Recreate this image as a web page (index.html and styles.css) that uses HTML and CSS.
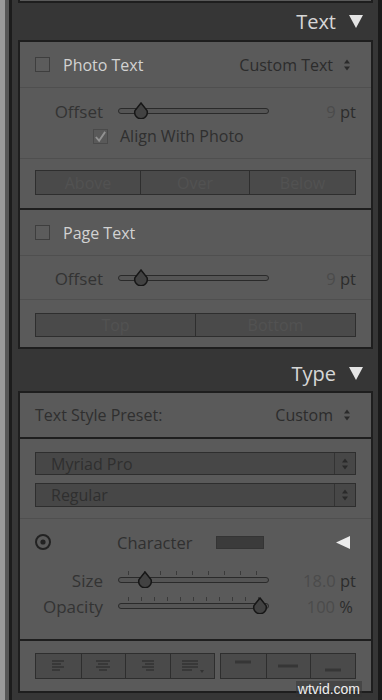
FILE: index.html
```html
<!DOCTYPE html>
<html>
<head>
<meta charset="utf-8">
<link rel="stylesheet" href="styles.css">
</head>
<body>
<div class="frame">
  <div class="panel">
    <div class="cap"></div>

    <div class="hdr"><span>Text</span><svg class="hdr-tri" width="14" height="13" viewBox="0 0 14 13"><polygon points="0,0 14,0 7,13"/></svg></div>
    <div class="box">
      <div class="crow">
        <span class="cb"></span><span class="light">Photo Text</span>
        <span class="sel">Custom Text <svg class="ud" width="6" height="12" viewBox="0 0 6 12"><polygon points="0,4.5 3,0.5 6,4.5"/><polygon points="0,7.5 3,11.5 6,7.5"/></svg></span>
      </div>
      <div class="blk blk-a">
        <div class="srow">
          <span class="sl">Offset</span>
          <div class="track"><svg class="thumb" style="left:14px" width="16" height="17" viewBox="0 0 16 17"><path d="M8 1 L14 8.5 A6.3 6.3 0 1 1 2 8.5 Z"/></svg></div>
          <span class="val"><span class="num">9</span> pt</span>
        </div>
        <div class="arow">
          <span class="cb"><svg width="14" height="14" viewBox="0 0 14 14"><path d="M2 7 L5.5 11 L12 1.5" fill="none" stroke="#929292" stroke-width="2"/></svg></span>
          <span>Align With Photo</span>
        </div>
      </div>
      <div class="blk blk-b">
        <div class="seg"><span>Above</span><span>Over</span><span>Below</span></div>
      </div>

      <div class="crow crow-2 split">
        <span class="cb"></span><span class="light">Page Text</span>
      </div>
      <div class="blk blk-c">
        <div class="srow">
          <span class="sl">Offset</span>
          <div class="track"><svg class="thumb" style="left:14px" width="16" height="17" viewBox="0 0 16 17"><path d="M8 1 L14 8.5 A6.3 6.3 0 1 1 2 8.5 Z"/></svg></div>
          <span class="val"><span class="num">9</span> pt</span>
        </div>
      </div>
      <div class="blk blk-d">
        <div class="seg seg-2"><span>Top</span><span>Bottom</span></div>
      </div>
    </div>

    <div class="hdr hdr-2"><span>Type</span><svg class="hdr-tri" width="14" height="13" viewBox="0 0 14 13"><polygon points="0,0 14,0 7,13"/></svg></div>
    <div class="box">
      <div class="prow">
        <span>Text Style Preset:</span>
        <span class="sel">Custom <svg class="ud" width="6" height="12" viewBox="0 0 6 12"><polygon points="0,4.5 3,0.5 6,4.5"/><polygon points="0,7.5 3,11.5 6,7.5"/></svg></span>
      </div>
      <div class="blk blk-e">
        <div class="dd"><span class="dd-t">Myriad Pro</span><span class="dd-a"><svg class="ud" width="6" height="12" viewBox="0 0 6 12"><polygon points="0,4.5 3,0.5 6,4.5"/><polygon points="0,7.5 3,11.5 6,7.5"/></svg></span></div>
        <div class="dd dd-2"><span class="dd-t">Regular</span><span class="dd-a"><svg class="ud" width="6" height="12" viewBox="0 0 6 12"><polygon points="0,4.5 3,0.5 6,4.5"/><polygon points="0,7.5 3,11.5 6,7.5"/></svg></span></div>
      </div>
      <div class="chrow">
        <svg class="target" width="18" height="18" viewBox="0 0 18 18"><circle cx="9" cy="9" r="7" fill="none" stroke="#222" stroke-width="2"/><circle cx="9" cy="9" r="2.6" fill="#222"/></svg>
        <span class="chlbl">Character</span>
        <span class="swatch"></span>
        <svg class="ltri" width="14" height="13" viewBox="0 0 14 13"><polygon points="14,0 14,13 0,6.5"/></svg>
      </div>
      <div class="blk blk-f">
        <div class="srow">
          <span class="sl">Size</span>
          <div class="track ticks-a"><svg class="thumb" style="left:18px" width="16" height="17" viewBox="0 0 16 17"><path d="M8 1 L14 8.5 A6.3 6.3 0 1 1 2 8.5 Z"/></svg></div>
          <span class="val"><span class="num">18.0</span> pt</span>
        </div>
        <div class="srow">
          <span class="sl">Opacity</span>
          <div class="track ticks-b"><svg class="thumb" style="left:133px" width="16" height="17" viewBox="0 0 16 17"><path d="M8 1 L14 8.5 A6.3 6.3 0 1 1 2 8.5 Z"/></svg></div>
          <span class="val val-p"><span class="num">100</span> %</span>
        </div>
      </div>
      <div class="blk blk-g">
        <div class="abar">
          <div class="agrp g4">
            <span class="ab"><svg width="20" height="16" viewBox="0 0 20 16"><path d="M4 3h12M4 6h9M4 9h12M4 12h8"/></svg></span>
            <span class="ab"><svg width="20" height="16" viewBox="0 0 20 16"><path d="M3 3h14M5 6h10M3 9h14M6 12h8"/></svg></span>
            <span class="ab"><svg width="20" height="16" viewBox="0 0 20 16"><path d="M4 3h12M7 6h9M4 9h12M8 12h8"/></svg></span>
            <span class="ab"><svg width="24" height="16" viewBox="0 0 24 16"><path d="M2 3h16M2 6h16M2 9h16M2 12h10"/><polygon class="fl" points="20,12 24,12 22,15"/></svg></span>
          </div>
          <div class="agrp g3">
            <span class="ab"><svg width="20" height="16" viewBox="0 0 20 16"><path class="thick" d="M2 4h16"/></svg></span>
            <span class="ab"><svg width="24" height="16" viewBox="0 0 24 16"><path class="thick" d="M2 8h20"/></svg></span>
            <span class="ab"><svg width="20" height="16" viewBox="0 0 20 16"><path class="thick" d="M2 12h16"/></svg></span>
          </div>
        </div>
      </div>
    </div>
  </div>
  <span class="wm">wtvid.com</span>
</div>
</body>
</html>
```
FILE: styles.css
```css
* { box-sizing: border-box; }
html, body { margin: 0; padding: 0; }
body {
  background: #9a9a9a;
  font-family: "Open Sans", "DejaVu Sans", sans-serif;
  width: 382px;
  height: 700px;
  overflow: hidden;
}
.frame {
  margin-left: 5px;
  border-left: 4px solid #565656;
  height: 700px;
  position: relative;
}
.panel {
  border-left: 3px solid #1c1c1c;
  border-right: 4px solid #1a1a1a;
  background: #363636;
  padding: 0 5px 0 6px;
  height: 700px;
}
.cap {
  height: 3px;
  background: #5a5a5a;
  border: 2px solid #1e1e1e;
  border-top: 0;
}
.hdr {
  height: 37px;
  display: flex;
  justify-content: flex-end;
  align-items: center;
  gap: 13px;
  padding-right: 10px;
  color: #d6d6d6;
  font-size: 20px;
}
.hdr-2 { height: 42px; padding-top: 6px; }
.hdr-tri { fill: #e4e4e4; }
.box {
  border: 2px solid #1e1e1e;
  background: #5a5a5a;
  font-size: 16px;
  color: #303030;
}
.crow {
  height: 46px;
  display: flex;
  align-items: center;
  padding: 0 21px 0 15px;
  border-bottom: 1px solid #4f4f4f;
}
.crow-2 { height: 48px; }
.split { border-top: 2px solid #1e1e1e; }
.cb {
  width: 15px;
  height: 15px;
  border: 1px solid #3e3e3e;
  background: #5c5c5c;
  display: inline-flex;
  flex: none;
}
.light { color: #d2d2d2; margin-left: 13px; }
.sel {
  margin-left: auto;
  display: flex;
  align-items: center;
  gap: 11px;
  color: #2c2c2c;
}
.ud { fill: #2a2a2a; }
.blk { border-bottom: 1px solid #4f4f4f; }
.blk-a { padding: 11px 0 10px; }
.blk-b { padding: 11px 15px 13px; border-bottom: 0; }
.blk-c { padding: 10px 0 9px; }
.blk-d { padding: 13px 15px 10px; border-bottom: 0; }
.blk-e { padding: 13px 15px 11px; }
.blk-f { padding: 3px 0 21px; border-bottom: 2px solid #1e1e1e; }
.blk-g { padding: 12px 15px 12px; border-bottom: 0; }
.srow {
  display: grid;
  grid-template-columns: 70px 151px 1fr;
  column-gap: 13px;
  align-items: center;
  height: 24px;
  padding: 0 15px 0 15px;
}
.srow + .srow { margin-top: 2px; }
.sl { text-align: right; color: #333; font-size: 17px; padding-right: 2px; }
.val { text-align: right; color: #2c2c2c; font-size: 16.5px; }
.val-p { padding-right: 3px; }
.num { color: #4b4b4b; }
.track {
  position: relative;
  height: 6px;
  border: 1px solid #2a2a2a;
  border-radius: 3px;
  background: #555;
}
.thumb {
  position: absolute;
  top: -7px;
  fill: #424242;
  stroke: #161616;
  stroke-width: 1.5;
}
.ticks-a::before, .ticks-b::before {
  content: "";
  position: absolute;
  left: 9px;
  right: 9px;
  top: -7px;
  height: 4px;
  background: repeating-linear-gradient(90deg, #3a3a3a 0 1px, transparent 1px 16px);
}
.ticks-b::before {
  background: repeating-linear-gradient(90deg, #3a3a3a 0 1px, transparent 1px 13px);
}
.arow {
  display: flex;
  align-items: center;
  gap: 12px;
  height: 24px;
  margin-top: 1px;
  padding-left: 73px;
  color: #2f2f2f;
}
.arow .cb { background: #595959; border-color: #4a4a4a; }
.seg {
  display: grid;
  grid-template-columns: 104px 109px 1fr;
  height: 25px;
  border: 1px solid #2e2e2e;
  background: #4a4a4a;
  color: #525252;
}
.seg span {
  display: flex;
  align-items: center;
  justify-content: center;
}
.seg span + span { border-left: 1px solid #2e2e2e; }
.seg-2 { grid-template-columns: 159px 1fr; height: 24px; }
.prow {
  height: 46px;
  display: flex;
  align-items: center;
  padding: 0 21px 0 15px;
  border-bottom: 2px solid #1e1e1e;
  color: #2f2f2f;
}
.dd {
  display: flex;
  height: 23px;
  border: 1px solid #2e2e2e;
  background: #474747;
  color: #2f2f2f;
}
.dd-2 { margin-top: 8px; height: 24px; }
.dd-t {
  flex: 1;
  display: flex;
  align-items: center;
  padding-left: 15px;
}
.dd-a {
  width: 21px;
  border-left: 1px solid #333;
  display: flex;
  align-items: center;
  justify-content: center;
}
.chrow {
  height: 46px;
  display: flex;
  align-items: center;
  padding: 0 21px 0 14px;
}
.chlbl { margin-left: 65px; color: #303030; font-size: 16.5px; }
.swatch {
  width: 48px;
  height: 13px;
  margin-left: 24px;
  background: #3b3b3b;
  border: 1px solid #343434;
}
.ltri { margin-left: auto; fill: #ececec; }
.abar {
  display: flex;
  gap: 5px;
  height: 26px;
}
.agrp {
  display: grid;
  border: 1px solid #2e2e2e;
  background: #4a4a4a;
}
.g4 { width: 180px; grid-template-columns: repeat(4, 1fr); }
.g3 { flex: 1; grid-template-columns: repeat(3, 1fr); }
.ab {
  display: flex;
  align-items: center;
  justify-content: center;
}
.ab + .ab { border-left: 1px solid #2e2e2e; }
.ab svg { stroke: #333; stroke-width: 1.7; fill: none; }
.ab svg .fl { fill: #333; stroke: none; }
.ab svg .thick { stroke-width: 3; stroke: #363636; }
.wm {
  position: absolute;
  right: 20px;
  bottom: 3px;
  color: #f0f0f0;
  font-family: "Liberation Sans", sans-serif;
  font-size: 14px;
  background: rgba(50, 50, 50, 0.5);
  padding: 0 2px;
}
```
